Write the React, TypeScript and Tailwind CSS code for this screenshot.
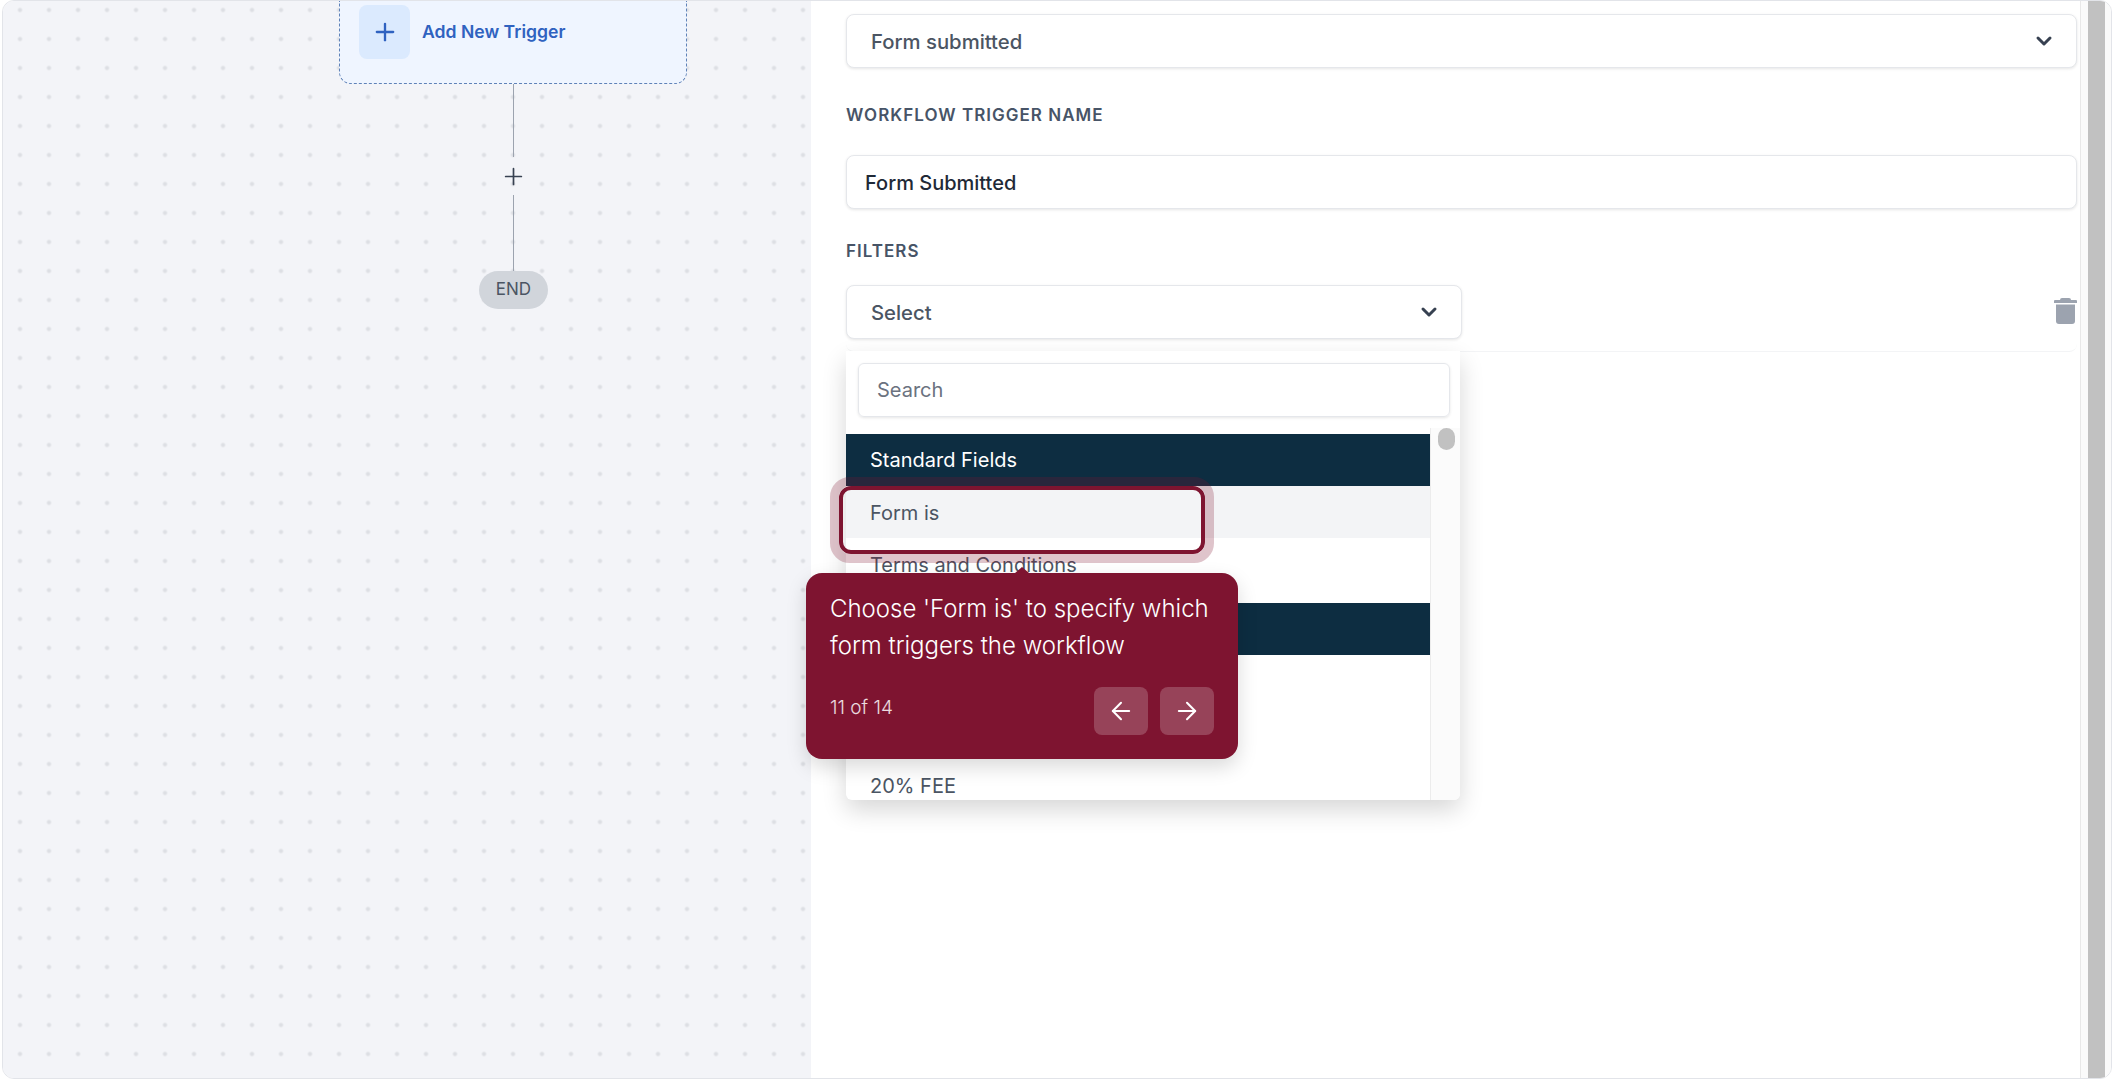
import React from 'react';
import { ArrowLeft, ArrowRight, ChevronDown, Plus } from 'lucide-react';

const SelectBox = ({ label, className }: { label: string; className: string }) => (
  <div className={`flex h-[54px] items-center justify-between rounded-lg border border-[#e5e7eb] bg-white pl-6 pr-5 shadow-[0_1px_3px_rgba(0,0,0,0.1)] ${className}`}>
    <span className="mt-[2px] text-[20.3px] font-medium text-[#4b5563]">{label}</span>
    <ChevronDown className="h-6 w-6 text-[#374151]" strokeWidth={3} />
  </div>
);

const FieldLabel = ({ children }: { children: React.ReactNode }) => (
  <div className="text-[17px] font-semibold leading-5 tracking-[0.06em] text-[#475467]">{children}</div>
);

const TrashIcon = () => (
  <svg viewBox="0 0 23 26" className="h-[26px] w-[23px] text-[#9ca3af]" fill="currentColor">
    <path d="M8 0h7a2 2 0 0 1 2 2h5a1 1 0 0 1 1 1v2H0V3a1 1 0 0 1 1-1h5a2 2 0 0 1 2-2z" />
    <path d="M2 6.5h19V23a3 3 0 0 1-3 3H5a3 3 0 0 1-3-3z" />
  </svg>
);

const FilterDropdown = () => (
  <div className="absolute left-0 top-[66px] z-10 flex h-[449px] w-[614px] flex-col overflow-hidden rounded-b-md bg-white shadow-[0_10px_24px_rgba(0,0,0,0.16)]">
    <div className="h-[83px] shrink-0 px-3 pt-[12px]">
      <div className="flex h-[54px] w-[592px] items-center rounded-md border border-[#e5e7eb] px-[18px] text-[20px] text-[#6b7280] shadow-[0_1px_3px_rgba(0,0,0,0.1)]">
        Search
      </div>
    </div>
    <div className="flex min-h-0 flex-1">
      <div className="flex w-[584px] flex-col text-[20px]">
        <div className="flex h-[52px] shrink-0 items-center bg-[#0d2d41] pl-6 text-white">Standard Fields</div>
        <div className="flex h-[52px] shrink-0 items-center bg-[#f3f4f6] pl-6 pt-px text-[#4b5563]">Form is</div>
        <div className="flex h-[52px] shrink-0 items-center pl-6 pt-px text-[#4b5563]">Terms and Conditions</div>
        <div className="mt-[13px] h-[52px] shrink-0 bg-[#0d2d41]" />
        <div className="h-[104px] shrink-0" />
        <div className="flex h-[52px] shrink-0 items-center pl-6 pt-[2px] text-[#4b5563]">20% FEE</div>
      </div>
      <div className="-mt-[6px] flex w-[30px] justify-center border-l border-[#ececec] bg-[#fbfbfb] pl-[2px]">
        <div className="h-[22px] w-[17px] rounded-full bg-[#c1c1c1]" />
      </div>
    </div>
  </div>
);

const App: React.FC = () => {
  return (
    <div className="relative h-screen w-full bg-white px-[2px] pb-[1px] font-['Inter',sans-serif]">
      <div className="flex h-full overflow-hidden rounded-xl border border-[#e2e4e9] bg-white">
        {/* workflow canvas */}
        <div className="w-[808px] shrink-0 bg-[#f3f4f8] bg-[radial-gradient(circle,#dddfe4_1.6px,transparent_2.6px)] bg-[length:29px_29px] bg-[position:2.5px_-5.5px] pl-[336px]">
          <div className="flex w-[348px] flex-col items-center">
            <div className="flex h-[83px] w-full items-start gap-3 rounded-b-xl border border-t-0 border-dashed border-[#5f82b8] bg-[#eff5ff] pl-[19px] pt-1">
              <div className="flex h-[54px] w-[51px] items-center justify-center rounded-lg bg-[#dbeafe]">
                <Plus className="h-7 w-7 text-[#2f62c0]" strokeWidth={2} />
              </div>
              <span className="mt-[15px] text-[17.6px] font-semibold leading-6 text-[#2f62c0]">Add New Trigger</span>
            </div>
            <div className="h-[73px] w-px bg-[#9ca3af]" />
            <div className="flex h-[38px] items-center justify-center">
              <Plus className="h-[27px] w-[27px] text-[#374151]" strokeWidth={1.5} />
            </div>
            <div className="h-[76px] w-px bg-[#9ca3af]" />
            <div className="ml-px flex h-[38px] w-[69px] items-center justify-center rounded-full bg-[#d1d5db] text-[17px] text-[#4b5563]">
              END
            </div>
          </div>
        </div>

        {/* trigger settings panel */}
        <div className="flex min-w-0 flex-1 flex-col bg-white pl-[35px] pr-[3px] pt-[13px]">
          <SelectBox label="Form submitted" className="w-full" />
          <div className="mb-[30px] mt-[37px]"><FieldLabel>WORKFLOW TRIGGER NAME</FieldLabel></div>
          <div className="flex h-[54px] items-center rounded-lg border border-[#e5e7eb] bg-white pl-[18px] pt-[2px] text-[20px] font-medium text-[#1f2937] shadow-[0_1px_3px_rgba(0,0,0,0.1)]">
            Form Submitted
          </div>
          <div className="mb-[24px] mt-[32px]"><FieldLabel>FILTERS</FieldLabel></div>
          <div className="relative flex h-[67px] items-start justify-between rounded-b-lg border-b border-[#f3f4f6]">
            <SelectBox label="Select" className="w-[616px]" />
            <div className="mt-[13px]"><TrashIcon /></div>
            <FilterDropdown />
          </div>
        </div>

        {/* page scrollbar */}
        <div className="flex w-[31px] shrink-0 justify-center border-l border-[#e8e8e8] bg-[#fafafa]">
          <div className="h-full w-[17px] bg-[#c1c1c1]" />
        </div>
      </div>

      {/* guided tour highlight */}
      <div className="absolute left-[830px] top-[477px] z-20 h-[86px] w-[384px] rounded-[20px] border-[9px] border-[#7e1430]/25">
        <div className="h-full w-full rounded-xl border-[4px] border-[#7e1430]" />
      </div>

      {/* guided tour tooltip */}
      <div className="absolute left-[806px] top-[573px] z-30 h-[186px] w-[432px] rounded-2xl bg-[#7e1430] px-6 pt-[18px] text-white shadow-[0_8px_20px_rgba(0,0,0,0.15)]">
        <div className="absolute -top-[6px] left-[209px] h-0 w-0 border-x-[7px] border-b-[6px] border-x-transparent border-b-[#7e1430]" />
        <p className="text-[24px] font-light leading-[36.5px]">
          Choose 'Form is' to specify which form triggers the workflow
        </p>
        <div className="mt-[23px] flex items-start justify-between">
          <span className="mt-[9px] text-[19px] font-light leading-6 text-white/85">11 of 14</span>
          <div className="flex gap-3">
            <button className="flex h-12 w-[54px] items-center justify-center rounded-lg bg-white/20">
              <ArrowLeft className="h-7 w-7" strokeWidth={1.75} />
            </button>
            <button className="flex h-12 w-[54px] items-center justify-center rounded-lg bg-white/20">
              <ArrowRight className="h-7 w-7" strokeWidth={1.75} />
            </button>
          </div>
        </div>
      </div>
    </div>
  );
};

export default App;
